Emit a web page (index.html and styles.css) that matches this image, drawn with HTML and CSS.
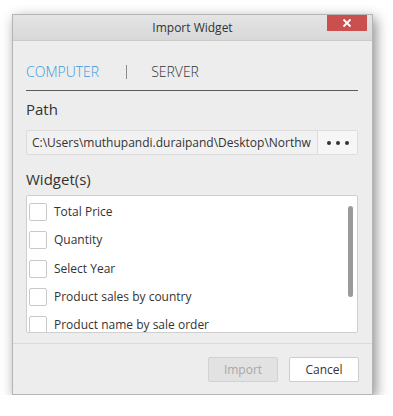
FILE: index.html
```html
<!DOCTYPE html>
<html lang="en">
<head>
  <meta charset="UTF-8" />
  <meta name="viewport" content="width=device-width, initial-scale=1.0"/>
  <title>Import Widget</title>
  <link rel="stylesheet" href="styles.css">
</head>
<body>

  <div class="window">
    <!-- Title bar -->
    <div class="titlebar">
      <span class="title">Import Widget</span>
      <span class="close-btn">
        <svg width="10" height="10" viewBox="0 0 10 10">
          <path d="M1.5 1.5 L8.5 8.5 M8.5 1.5 L1.5 8.5" stroke="#fff" stroke-width="1.8" />
        </svg>
      </span>
    </div>

    <div class="content">
      <div class="tabs">
        <span class="tab active">COMPUTER</span>
        <span class="tab-sep"></span>
        <span class="tab">SERVER</span>
      </div>

      <div class="label label-path">Path</div>
      <div class="path-box">
        <span class="path-text">C:\Users\muthupandi.duraipand\Desktop\Northw</span>
        <span class="browse-btn">
          <svg width="24" height="6" viewBox="0 0 24 6">
            <circle cx="3" cy="3" r="2" fill="#333" />
            <circle cx="12" cy="3" r="2" fill="#333" />
            <circle cx="21" cy="3" r="2" fill="#333" />
          </svg>
        </span>
      </div>

      <div class="label label-widgets">Widget(s)</div>
      <div class="widget-list">
        <div class="widget-item"><span class="checkbox"></span>Total Price</div>
        <div class="widget-item"><span class="checkbox"></span>Quantity</div>
        <div class="widget-item"><span class="checkbox"></span>Select Year</div>
        <div class="widget-item"><span class="checkbox"></span>Product sales by country</div>
        <div class="widget-item"><span class="checkbox"></span>Product name by sale order</div>
        <div class="scroll-thumb"></div>
      </div>
    </div>

    <div class="footer">
      <button class="btn disabled">Import</button>
      <button class="btn">Cancel</button>
    </div>
  </div>

</body>
</html>
```

FILE: styles.css
```css
body {
  margin: 0;
  background: #ffffff;
  font-family: 'Open Sans', 'Noto Sans', sans-serif;
  color: #333;
}

.window {
  margin: 14px 0 0 12px;
  width: 359px;
  height: 379px;
  border: 1px solid #b5b5b5;
  background: #ededed;
  box-shadow: 3px 4px 12px rgba(0,0,0,0.45);
  display: flex;
  flex-direction: column;
}

.titlebar {
  position: relative;
  height: 25px;
  flex-shrink: 0;
  background: linear-gradient(#e4e4e4, #d8d8d8);
  border-bottom: 1px solid #cacaca;
  display: flex;
  align-items: center;
  justify-content: center;
}

.title {
  font-size: 12px;
  color: #333;
}

.close-btn {
  position: absolute;
  top: 0;
  right: 5px;
  width: 40px;
  height: 16px;
  background: #c9504f;
  display: flex;
  align-items: center;
  justify-content: center;
}

.content {
  padding: 0 14px 0 13px;
  display: flex;
  flex-direction: column;
}

.tabs {
  display: flex;
  align-items: flex-end;
  height: 40px;
  padding-bottom: 9px;
  border-bottom: 1px solid #5a5a5a;
  font-size: 14px;
  font-weight: 300;
  color: #333;
}

.tab.active {
  color: #3a9ad9;
}

.tab-sep {
  width: 1px;
  height: 14px;
  margin: 0 24px 2px 27px;
  background: #8a8a8a;
}

.label {
  font-size: 15px;
  color: #333;
  height: 25px;
  line-height: 25px;
}

.label-path {
  margin-top: 6px;
}

.label-widgets {
  margin-top: 12px;
}

.path-box {
  margin-top: 8px;
  box-sizing: border-box;
  height: 25px;
  border: 1px solid #dcdcdc;
  border-radius: 2px;
  background: #f1f1f1;
  display: flex;
  align-items: center;
}

.path-text {
  flex: 1;
  overflow: hidden;
  white-space: nowrap;
  font-size: 12px;
  padding-left: 5px;
  color: #333;
}

.browse-btn {
  width: 39px;
  height: 100%;
  border-left: 1px solid #dcdcdc;
  background: #f6f6f6;
  display: flex;
  align-items: center;
  justify-content: center;
}

.widget-list {
  position: relative;
  margin-top: 3px;
  box-sizing: border-box;
  height: 138px;
  overflow: hidden;
  background: #fff;
  border: 1px solid #cfcfcf;
  border-radius: 2px;
  padding-top: 2px;
}

.widget-item {
  display: flex;
  align-items: center;
  height: 28.25px;
  font-size: 12px;
  line-height: 14px;
  color: #333;
}

.checkbox {
  width: 16px;
  height: 16px;
  margin: 0 7px 0 2px;
  border: 1px solid #c9c9c9;
  border-radius: 2px;
  background: #fff;
}

.scroll-thumb {
  position: absolute;
  top: 10px;
  right: 4px;
  width: 5px;
  height: 91px;
  border-radius: 3px;
  background: #9a9a9a;
}

.footer {
  margin-top: 10px;
  height: 50px;
  border-top: 1px solid #dadada;
  display: flex;
  align-items: center;
  justify-content: flex-end;
  gap: 11px;
  padding-right: 13px;
}

.btn {
  width: 70px;
  height: 25px;
  border: 1px solid #cccccc;
  border-radius: 2px;
  background: #fff;
  font-family: 'Open Sans', 'Noto Sans', sans-serif;
  font-size: 12px;
  color: #333;
}

.btn.disabled {
  background: #e2e2e2;
  border-color: #d2d2d2;
  color: #a8a8a8;
}
```
